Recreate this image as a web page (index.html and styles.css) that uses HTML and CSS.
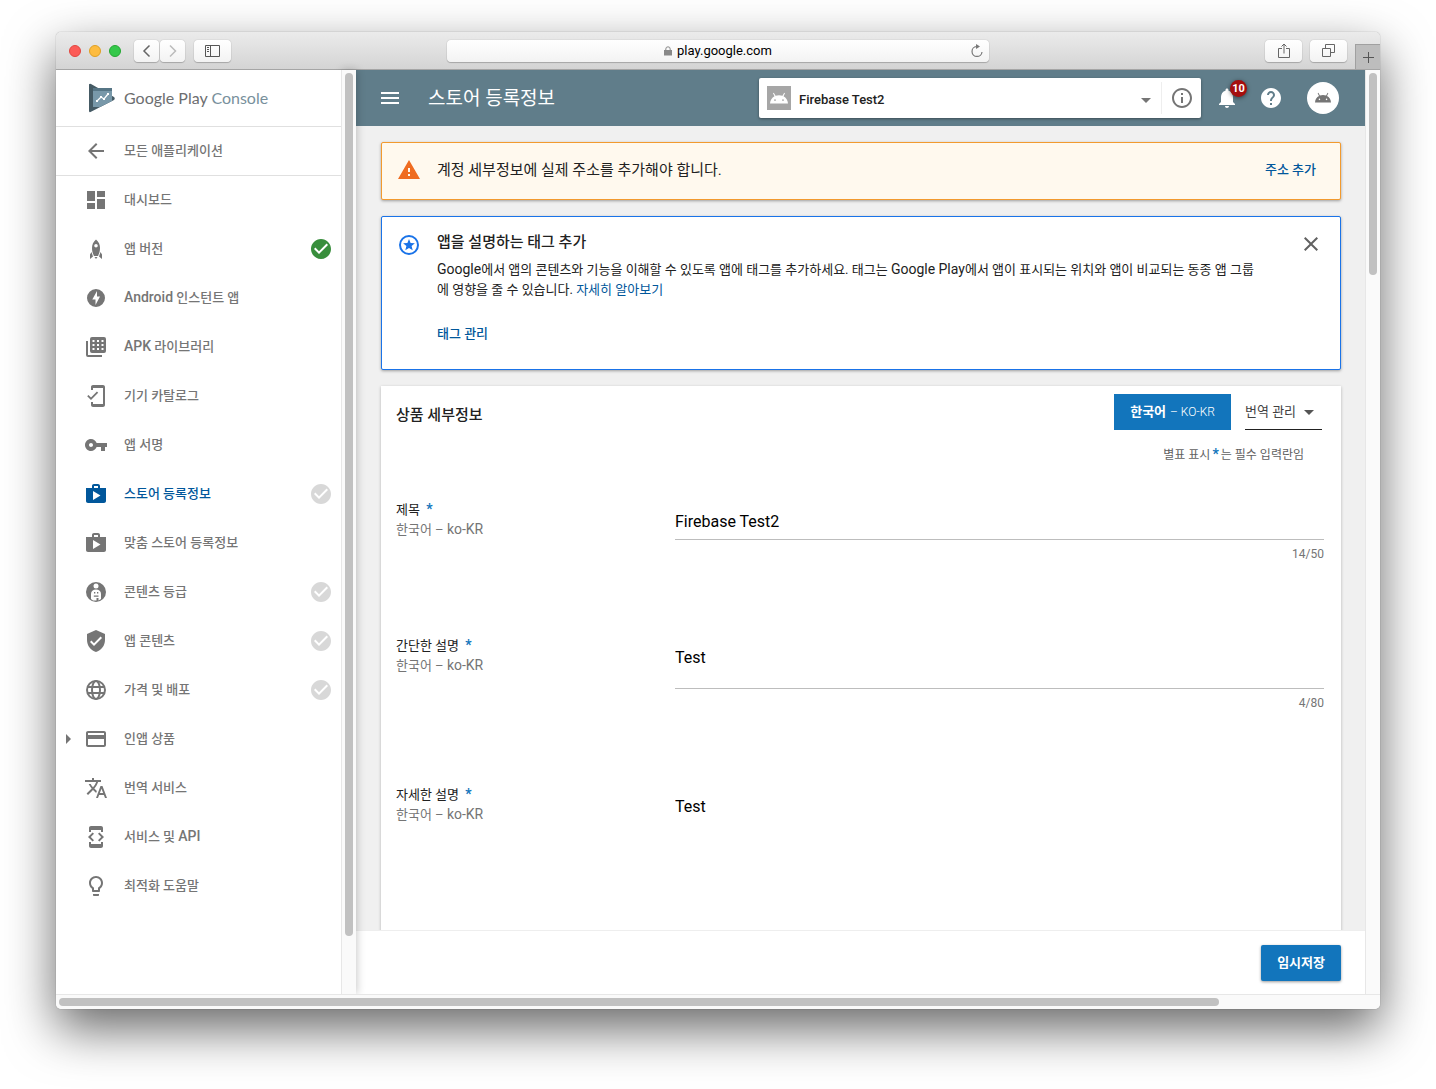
FILE: index.html
```
<!DOCTYPE html>
<html lang="ko">
<head>
  <meta charset="UTF-8">
  <meta name="viewport" content="width=device-width, initial-scale=1.0">
  <title>스토어 등록정보 - Google Play Console</title>
  <link rel="stylesheet" href="styles.css">
</head>
<body>
  <svg class="defs" width="0" height="0" aria-hidden="true">
    <symbol id="check" viewBox="0 0 24 24"><path d="M12 2C6.48 2 2 6.48 2 12s4.48 10 10 10 10-4.48 10-10S17.52 2 12 2zm-2 15l-5-5 1.41-1.41L10 14.17l7.59-7.59L19 8l-9 9z"/></symbol>
    <symbol id="shop" viewBox="0 0 24 24"><path d="M16 6V4c0-1.11-.89-2-2-2h-4c-1.11 0-2 .89-2 2v2H2v13c0 1.11.89 2 2 2h16c1.11 0 2-.89 2-2V6h-6zm-6-2h4v2h-4V4zM9 18V9l7.5 4.500L9 18z"/></symbol>
    <symbol id="android" viewBox="0 0 18 12"><path d="M0 11.500C.2 8.200 1.900 5.700 4.500 4.300L3 1.200l.8-.5 1.700 3.100c2.200-.9 4.800-.9 7 0L14.200.7l.8.5-1.500 3.100c2.600 1.400 4.300 3.900 4.500 7.200zM5 7.200a.9.900 0 1 0 0 1.800.9.900 0 0 0 0-1.800zm8 0a.9.900 0 1 0 0 1.800.9.900 0 0 0 0-1.800z"/></symbol>
  </svg>

  <div class="window">
    <div class="toolbar">
      <div class="tools">
        <span class="light red"></span>
        <span class="light yellow"></span>
        <span class="light green"></span>
        <div class="nav-buttons">
          <button class="tool" aria-label="Back"><svg width="25" height="22" viewBox="0 0 25 22"><path d="M15.500 5.500L10 11l5.500 5.500" stroke="#666" stroke-width="1.500"/></svg></button>
          <button class="tool" aria-label="Forward"><svg width="25" height="22" viewBox="0 0 25 22"><path d="M10 5.500l5.500 5.500-5.500 5.500" stroke="#bbb" stroke-width="1.500"/></svg></button>
        </div>
        <button class="tool wide" aria-label="Sidebar"><svg width="15" height="12" viewBox="0 0 15 12"><path d="M.5.500h14v11H.5zM5.500.500v11M2 2.500h2M2 4.500h2M2 6.500h2" stroke="#555"/></svg></button>
      </div>
      <div class="address">
        <svg width="8" height="10" viewBox="0 0 8 10"><path d="M0 4h8v5.500H0z" fill="#888"/><path d="M1.800 4.500V3a2.200 2.200 0 0 1 4.400 0v1.500" stroke="#888"/></svg>
        <span>play.google.com</span>
        <button class="reload" aria-label="Reload"><svg width="14" height="14" viewBox="0 0 14 14"><path d="M6.500 2.500A5 5 0 1 0 12 8" stroke="#777" stroke-width="1.200"/><path d="M6 0l4 2.500L6 5z" fill="#777"/></svg></button>
      </div>
      <div class="tools right">
        <button class="tool wide" aria-label="Share"><svg width="12" height="16" viewBox="0 0 12 16"><path d="M4 5.500H.5v9h11v-9H8M6 10.500V1M3.500 3.500L6 1l2.500 2.500" stroke="#666"/></svg></button>
        <button class="tool wide" aria-label="Tabs"><svg width="13" height="13" viewBox="0 0 13 13"><path d="M.5 4.500h8v8h-8zM3.500 4.500v-4h9v8h-4" stroke="#666"/></svg></button>
        <button class="new-tab" aria-label="New tab"><svg width="11" height="11" viewBox="0 0 11 11"><path d="M5.500 0v11M0 5.500h11" stroke="#555"/></svg></button>
      </div>
    </div>

    <div class="page">
      <aside class="sidebar">
        <a class="logo" href="#">
          <svg width="27" height="30" viewBox="0 0 27 30">
            <path d="M1.500 1Q1 .5 1 2v26q0 1.500 1.500 1L26 17q1.500-1.500 0-3L3 1Q2 .5 1.500 1z" fill="#455a64"/>
            <path d="M5 5h19v13L12 24H5z" fill="#7898a9"/>
            <path d="M5 5h19v3H5z" fill="#567585"/>
            <path d="M9 18l4-4 3 2 4-5" fill="none" stroke="#fff" stroke-width="1.300"/>
            <path d="M8 17h2v2H8zM12 13h2v2h-2zM15 15h2v2h-2zM19 10h2v2h-2z" fill="#fff"/>
          </svg>
          <span>Google Play <span class="console">Console</span></span>
        </a>
        <a class="item back" href="#">
          <svg class="icon" viewBox="0 0 24 24"><path d="M20 11H7.830l5.590-5.590L12 4l-8 8 8 8 1.410-1.410L7.830 13H20v-2z"/></svg>
          <span>모든 애플리케이션</span>
        </a>
        <nav>
          <a class="item" href="#">
            <svg class="icon" viewBox="0 0 24 24"><path d="M3 13h8V3H3v10zm0 8h8v-6H3v6zm10 0h8V11h-8v10zm0-18v6h8V3h-8z"/></svg>
            <span>대시보드</span>
          </a>
          <a class="item" href="#">
            <svg class="icon" viewBox="0 0 24 24"><path d="M12 2.500C9 5 8 8 8 11c0 3 .7 5.500 2 8h4c1.300-2.500 2-5 2-8 0-3-1-6-4-8.500zm0 4.500a1.800 1.800 0 1 1 0 3.600A1.800 1.800 0 0 1 12 7zM7.500 15L6 17.500V22l3-2.500zM16.500 15l1.500 2.500V22l-3-2.500zM10.500 20h3L12 22z"/></svg>
            <span>앱 버전</span>
            <svg class="status done"><use href="#check"/></svg>
          </a>
          <a class="item" href="#">
            <svg class="icon" viewBox="0 0 24 24"><path d="M12 3a9 9 0 1 0 0 18 9 9 0 0 0 0-18zm-.5 16v-5.500H8.300L13 5v5.500h3L11.500 19z"/></svg>
            <span><span class="latin">Android</span> 인스턴트 앱</span>
          </a>
          <a class="item" href="#">
            <svg class="icon" viewBox="0 0 24 24"><path fill-rule="evenodd" d="M8 2h12a2 2 0 0 1 2 2v12a2 2 0 0 1-2 2H8a2 2 0 0 1-2-2V4a2 2 0 0 1 2-2zm.500 3v2h2V5zm4.500 0v2h2V5zm4.500 0v2h2V5zm-9 4v2h2V9zm4.500 0v2h2V9zm4.500 0v2h2V9zm-9 4v2h2v-2zm4.500 0v2h2v-2zm4.500 0v2h2v-2zM2 6h2v14h14v2H4a2 2 0 0 1-2-2z"/></svg>
            <span><span class="latin">APK</span> 라이브러리</span>
          </a>
          <a class="item" href="#">
            <svg class="icon" viewBox="0 0 24 24"><path d="M19 1H9c-1.100 0-2 .9-2 2v3h2V4h10v16H9v-2H7v3c0 1.100.9 2 2 2h10c1.100 0 2-.9 2-2V3c0-1.100-.9-2-2-2zM7.010 13.470l-2.550-2.550-1.270 1.270L7 16l7.190-7.190-1.270-1.270z"/></svg>
            <span>기기 카탈로그</span>
          </a>
          <a class="item" href="#">
            <svg class="icon" viewBox="0 0 24 24"><path d="M12.650 10C11.830 7.670 9.610 6 7 6c-3.310 0-6 2.690-6 6s2.690 6 6 6c2.610 0 4.830-1.670 5.650-4H17v4h4v-4h2v-4H12.650zM7 14c-1.100 0-2-.9-2-2s.9-2 2-2 2 .9 2 2-.9 2-2 2z"/></svg>
            <span>앱 서명</span>
          </a>
          <a class="item active" href="#">
            <svg class="icon"><use href="#shop"/></svg>
            <span>스토어 등록정보</span>
            <svg class="status"><use href="#check"/></svg>
          </a>
          <a class="item" href="#">
            <svg class="icon"><use href="#shop"/></svg>
            <span>맞춤 스토어 등록정보</span>
          </a>
          <a class="item" href="#">
            <svg class="icon" viewBox="0 0 24 24"><circle cx="12" cy="12" r="10"/><circle cx="12" cy="6" r="2.500" fill="#fff"/><path d="M7 19v-5c0-3 2-4.500 5-4.500s5 1.500 5 4.500v5l-2.500 1.500V18h-2v2.500H9z" fill="#fff"/><path d="M10 12h1.300v1.500H10zM13 12h1.300v1.500H13zM9.800 15.500h4.700v1.300H9.800z"/></svg>
            <span>콘텐츠 등급</span>
            <svg class="status"><use href="#check"/></svg>
          </a>
          <a class="item" href="#">
            <svg class="icon" viewBox="0 0 24 24"><path d="M12 1L3 5v6c0 5.550 3.840 10.740 9 12 5.160-1.260 9-6.450 9-12V5l-9-4zm-2 16l-4-4 1.410-1.410L10 14.170l6.590-6.590L18 9l-8 8z"/></svg>
            <span>앱 콘텐츠</span>
            <svg class="status"><use href="#check"/></svg>
          </a>
          <a class="item" href="#">
            <svg class="icon line" viewBox="0 0 24 24"><circle cx="12" cy="12" r="9"/><ellipse cx="12" cy="12" rx="4" ry="9"/><path d="M3.500 9h17M3.500 15h17"/></svg>
            <span>가격 및 배포</span>
            <svg class="status"><use href="#check"/></svg>
          </a>
          <a class="item expandable" href="#">
            <svg class="icon" viewBox="0 0 24 24"><path d="M20 4H4c-1.110 0-2 .89-2 2v12c0 1.110.89 2 2 2h16c1.110 0 2-.89 2-2V6c0-1.110-.89-2-2-2zm0 14H4v-6h16v6zm0-10H4V6h16v2z"/></svg>
            <span>인앱 상품</span>
          </a>
          <a class="item" href="#">
            <svg class="icon" viewBox="0 0 24 24"><path d="M12.870 15.070l-2.540-2.510.03-.03c1.740-1.940 2.980-4.170 3.710-6.530H17V4h-7V2H8v2H1v1.990h11.170C11.500 7.920 10.440 9.750 9 11.350 8.070 10.320 7.300 9.190 6.690 8h-2c.73 1.630 1.730 3.170 2.980 4.560l-5.090 5.020L4 19l5-5 3.110 3.110.76-2.040zM18.500 10h-2L12 22h2l1.120-3h4.750L21 22h2l-4.500-12zm-2.620 7l1.620-4.330L19.120 17h-3.240z"/></svg>
            <span>번역 서비스</span>
          </a>
          <a class="item" href="#">
            <svg class="icon" viewBox="0 0 24 24"><path d="M7 5h10v2h2V3c0-1.100-.9-2-2-2H7c-1.100 0-2 .9-2 2v4h2V5zm8.410 11.590L20 12l-4.590-4.590L14 8.830 17.170 12 14 15.170l1.410 1.420zM10 15.170L6.830 12 10 8.830 8.590 7.410 4 12l4.590 4.590L10 15.170zM17 19H7v-2H5v4c0 1.100.9 2 2 2h10c1.100 0 2-.9 2-2v-4h-2v2z"/></svg>
            <span>서비스 및 <span class="latin">API</span></span>
          </a>
          <a class="item" href="#">
            <svg class="icon" viewBox="0 0 24 24"><path d="M9 21c0 .55.45 1 1 1h4c.55 0 1-.45 1-1v-1H9v1zm3-19C8.140 2 5 5.140 5 9c0 2.380 1.190 4.470 3 5.740V17c0 .55.45 1 1 1h6c.55 0 1-.45 1-1v-2.260c1.810-1.270 3-3.360 3-5.740 0-3.860-3.140-7-7-7zm2.850 11.100l-.85.6V16h-4v-2.300l-.85-.6C7.800 12.160 7 10.630 7 9c0-2.760 2.240-5 5-5s5 2.240 5 5c0 1.630-.8 3.160-2.150 4.100z"/></svg>
            <span>최적화 도움말</span>
          </a>
        </nav>
      </aside>
      <div class="track side-track"><div class="thumb"></div></div>

      <main class="main">
        <header class="header">
          <button class="menu" aria-label="메뉴"><svg width="18" height="12" viewBox="0 0 18 12"><path d="M0 0h18v2H0zM0 5h18v2H0zM0 10h18v2H0z" fill="#fff"/></svg></button>
          <h1>스토어 등록정보</h1>
          <div class="app-picker">
            <span class="app-icon"><svg width="18" height="12"><use href="#android"/></svg></span>
            <select class="app-select" aria-label="앱"><option>Firebase Test2</option></select>
            <button class="info" aria-label="정보"><svg class="icon" viewBox="0 0 24 24"><path d="M11 17h2v-6h-2v6zm1-15C6.480 2 2 6.480 2 12s4.480 10 10 10 10-4.480 10-10S17.520 2 12 2zm0 18c-4.410 0-8-3.590-8-8s3.590-8 8-8 8 3.590 8 8-3.590 8-8 8zM11 9h2V7h-2v2z"/></svg></button>
          </div>
          <button class="bell" aria-label="알림">
            <svg class="icon" viewBox="0 0 24 24"><path d="M12 22c1.100 0 2-.9 2-2h-4c0 1.100.89 2 2 2zm6-6v-5c0-3.070-1.640-5.640-4.500-6.320V4c0-.83-.67-1.500-1.500-1.500s-1.500.67-1.500 1.500v.68C7.630 5.360 6 7.920 6 11v5l-2 2v1h16v-1l-2-2z"/></svg>
            <span class="badge">10</span>
          </button>
          <button class="help" aria-label="도움말"><svg class="icon" viewBox="0 0 24 24"><path d="M12 2C6.480 2 2 6.480 2 12s4.480 10 10 10 10-4.480 10-10S17.520 2 12 2zm1 17h-2v-2h2v2zm2.070-7.750l-.9.920C13.450 12.900 13 13.500 13 15h-2v-.5c0-1.100.45-2.100 1.170-2.830l1.240-1.260c.37-.36.59-.86.59-1.410 0-1.100-.9-2-2-2s-2 .9-2 2H8c0-2.210 1.790-4 4-4s4 1.790 4 4c0 .88-.36 1.680-.93 2.250z"/></svg></button>
          <button class="avatar" aria-label="계정"><svg width="16" height="11"><use href="#android"/></svg></button>
        </header>

        <div class="content">
          <section class="notice warning">
            <svg class="icon" viewBox="0 0 24 24"><path d="M1 21h22L12 2 1 21zm12-3h-2v-2h2v2zm0-4h-2v-4h2v4z"/></svg>
            <p class="notice-title">계정 세부정보에 실제 주소를 추가해야 합니다.</p>
            <a class="action" href="#">주소 추가</a>
          </section>

          <section class="notice tip">
            <svg class="icon" viewBox="0 0 24 24"><circle cx="12" cy="12" r="9" fill="none" stroke="#1a73e8" stroke-width="2"/><path d="M12 6l1.600 4 4.300.3-3.300 2.700 1.100 4.200L12 14.900l-3.700 2.300 1.100-4.200-3.300-2.700 4.300-.3z"/></svg>
            <div class="tip-body">
              <h2 class="notice-title strong">앱을 설명하는 태그 추가</h2>
              <p><span class="latin">Google</span>에서 앱의 콘텐츠와 기능을 이해할 수 있도록 앱에 태그를 추가하세요. 태그는 <span class="latin">Google Play</span>에서 앱이 표시되는 위치와 앱이 비교되는 동종 앱 그룹에 영향을 줄 수 있습니다. <a href="#">자세히 알아보기</a></p>
              <a class="action" href="#">태그 관리</a>
            </div>
            <button class="close" aria-label="닫기"><svg class="icon" viewBox="0 0 24 24"><path d="M19 6.410L17.590 5 12 10.590 6.410 5 5 6.410 10.590 12 5 17.590 6.410 19 12 13.410 17.590 19 19 17.590 13.410 12z"/></svg></button>
          </section>

          <form class="card">
            <div class="card-head">
              <h2>상품 세부정보</h2>
              <button class="lang" type="button">한국어 <span>– KO-KR</span></button>
              <select class="translate" aria-label="번역 관리"><option>번역 관리</option></select>
            </div>
            <p class="required">별표 표시<b>*</b>는 필수 입력란임</p>

            <div class="field">
              <label for="title">제목 <b>*</b><span>한국어 – <span class="latin">ko-KR</span></span></label>
              <div>
                <input id="title" type="text" value="Firebase Test2">
                <p class="count">14/50</p>
              </div>
            </div>
            <div class="field">
              <label for="short">간단한 설명 <b>*</b><span>한국어 – <span class="latin">ko-KR</span></span></label>
              <div>
                <textarea id="short">Test</textarea>
                <p class="count">4/80</p>
              </div>
            </div>
            <div class="field">
              <label for="full">자세한 설명 <b>*</b><span>한국어 – <span class="latin">ko-KR</span></span></label>
              <div>
                <textarea id="full" class="tall">Test</textarea>
              </div>
            </div>
          </form>
        </div>

        <footer class="footer">
          <button class="save">임시저장</button>
        </footer>
      </main>
      <div class="track main-track"><div class="thumb"></div></div>
    </div>
    <div class="bottom-track"><div class="thumb"></div></div>
  </div>
</body>
</html>
```
FILE: styles.css
```
* {box-sizing: border-box;}
body {margin: 0; height: 100vh; padding: 32px 56px 80px; display: flex; background: #fff; color: #212121; font: 13px/20px Roboto, "Noto Sans CJK KR", sans-serif; overflow: hidden;}
h1, h2, p {margin: 0; font-weight: 400;}
a {color: #01579b; text-decoration: none;}
button, input, select, textarea {font: inherit; color: inherit; margin: 0; padding: 0; border: 0; background: none; border-radius: 0; outline: 0;}
button {display: flex; align-items: center; justify-content: center;}
select {appearance: none;}
svg {display: block; flex: none;}
.defs {position: absolute;}
.icon {width: 24px; height: 24px; fill: currentColor;}
.icon.line {fill: none; stroke: currentColor; stroke-width: 2;}
.latin {font-size: 14px; line-height: 14px;}

/* browser window */
.window {flex: 1; min-width: 0; display: flex; flex-direction: column; border-radius: 5px; overflow: hidden; background: #fafafa; box-shadow: 0 0 1px rgba(0, 0, 0, .5), 0 20px 50px rgba(0, 0, 0, .6);}
.toolbar {flex: none; height: 38px; display: grid; grid-template-columns: 1fr 41% 1fr; align-items: center; background: linear-gradient(#ebebeb, #d4d4d4); border-bottom: 1px solid #a5a5a5;}
.tools {display: flex; align-items: center; height: 100%; padding-left: 13px;}
.light {width: 12px; height: 12px; margin-right: 8px; border-radius: 50%;}
.red {background: #fc5b57; border: 1px solid #e2463f;}
.yellow {background: #fdbc40; border: 1px solid #dfa023;}
.green {background: #34c84a; border: 1px solid #24a732;}
.nav-buttons {display: flex; gap: 1px; margin: 0 9px 0 5px;}
.tool {height: 22px; border-radius: 4px; background: linear-gradient(#fff, #f3f3f3); box-shadow: 0 0 1px rgba(0, 0, 0, .35), 0 1px 1px rgba(0, 0, 0, .2);}
.tool svg, .address svg, .new-tab svg {fill: none;}
.wide {width: 37px;}
.address {display: flex; align-items: center; justify-content: center; gap: 5px; height: 22px; padding-top: 1px; color: #000; border-radius: 4px; background: linear-gradient(#fff, #f3f3f3); box-shadow: 0 0 1px rgba(0, 0, 0, .35), 0 1px 1px rgba(0, 0, 0, .2); position: relative;}
.reload {position: absolute; right: 5px;}
.right {justify-content: flex-end; gap: 8px;}
.new-tab {align-self: flex-end; width: 25px; height: 25px; background: #bdbdbd; border: 1px solid #a0a0a0; border-width: 1px 0 0 1px;}
.page {flex: 1; min-height: 0; display: flex;}
.track {flex: none; width: 15px; padding: 3px 2px; background: #fafafa; border-left: 1px solid #e7e7e7;}
.thumb {width: 8px; border-radius: 4px; background: #c1c1c1;}
.side-track {position: relative; box-shadow: 1px 0 8px rgba(0, 0, 0, .22);}
.side-track .thumb {height: 94%; margin-left: 1px;}
.main-track .thumb {height: 22%; margin-left: 1px;}
.bottom-track {position: relative; z-index: 1; flex: none; height: 15px; padding: 3px; background: #fafafa; border-top: 1px solid #e7e7e7;}
.bottom-track .thumb {width: 88%; height: 8px;}

/* sidebar */
.sidebar {position: relative; z-index: 1; flex: none; width: 285px; background: #fff; overflow: hidden;}
.logo {display: flex; align-items: center; gap: 9px; height: 57px; padding: 0 0 1px 32px; border-bottom: 1px solid #e0e0e0; color: #6d6e70; font: 16px/24px Lato, sans-serif;}
.console {color: #78909c;}
.item {display: flex; align-items: center; height: 49px; padding: 0 8px 1px 28px; color: #757575; font-weight: 500;}
.item .icon {margin-right: 16px;}
.back {padding-bottom: 0; border-bottom: 1px solid #e0e0e0;}
.active {color: #01579b;}
.status {width: 24px; height: 24px; margin-left: auto; fill: #d8d8d8;}
.done {fill: #388e3c;}
.expandable {padding-left: 10px;}
.expandable::before {content: ""; border: 5px solid transparent; border-left-color: #757575; border-right: 0; margin-right: 13px;}

/* header */
.main {flex: 1; min-width: 0; display: flex; flex-direction: column; background: #f0f0f0;}
.header {flex: none; display: flex; align-items: center; height: 56px; padding: 0 26px 0 25px; background: #607d8a; color: #fff;}
.header h1 {margin-left: 29px; padding-top: 2px; font-size: 19px; line-height: 28px;}
.app-picker {display: flex; align-items: center; width: 442px; height: 40px; margin-left: auto; padding-left: 8px; border-radius: 2px; background: #fff; color: #212121; box-shadow: 0 1px 3px rgba(0, 0, 0, .4);}
.app-icon {display: flex; align-items: center; justify-content: center; width: 24px; height: 24px; background: #a6a6a6; fill: #fff;}
.app-select {flex: 1; height: 32px; padding: 3px 8px 0; font-weight: 500; background: url("data:image/svg+xml,%3Csvg xmlns='http://www.w3.org/2000/svg' width='10' height='5'%3E%3Cpath d='M0 0h10L5 5z' fill='%23757575'/%3E%3C/svg%3E") no-repeat right 10px top 16px;}
.info {width: 40px; height: 32px; color: #757575; border-left: 1px solid #eee;}
.bell {position: relative; margin-left: 14px;}
.badge {position: absolute; top: -6px; left: 15px; width: 17px; height: 17px; border-radius: 50%; background: #a50e0e; box-shadow: 0 1px 4px rgba(0, 0, 0, .5); font-size: 11px; line-height: 17px; font-weight: 700;}
.help {margin-left: 20px;}
.avatar {width: 32px; height: 32px; margin-left: 24px; padding-bottom: 2px; border-radius: 50%; background: #fff; fill: #757575;}

/* notices */
.content {flex: 1; min-height: 0; overflow: hidden; padding: 16px 24px 0 25px; display: flex; flex-direction: column; gap: 16px;}
.notice {flex: none; display: flex; border: 1px solid; border-radius: 2px; box-shadow: 0 1px 3px rgba(0, 0, 0, .35);}
.notice > .icon {margin: 0 16px 0 15px;}
.notice-title {font-size: 15px; line-height: 24px;}
.strong {font-weight: 500;}
.action {font-weight: 500;}
.warning {align-items: center; height: 58px; padding: 0 24px 2px 0; background: #fff9ee; border-color: #f29a2e;}
.warning .icon {color: #ef6c20;}
.warning .action {margin-left: auto;}
.tip {height: 154px; padding: 13px 17px 0 0; background: #fff; border-color: #1a73e8;}
.tip > .icon {margin-top: 3px; color: #1a73e8;}
.tip-body {flex: 1; padding-right: 40px;}
.tip-body p {margin: 6px 0 24px;}
.close {align-self: flex-start; margin-top: 2px; color: #616161;}

/* product details */
.card {flex: none; padding: 8px 17px 0 15px; background: #fff; box-shadow: 0 1px 3px rgba(0, 0, 0, .25);}
.card-head {display: flex; align-items: center; padding-right: 2px;}
.card-head h2 {margin: 5px auto 0 0; font-size: 15px; line-height: 24px; font-weight: 500;}
.lang {height: 36px; margin-right: 14px; padding: 0 16px; gap: 4px; background: #1275bc; color: #fff; font-weight: 700;}
.lang span {font-size: 12px; font-weight: 300;}
.translate {width: 77px; height: 36px; color: #424242; border-bottom: 1px solid #212121; background: url("data:image/svg+xml,%3Csvg xmlns='http://www.w3.org/2000/svg' width='10' height='5'%3E%3Cpath d='M0 0h10L5 5z' fill='%23555'/%3E%3C/svg%3E") no-repeat right 8px top 16px;}
.required {margin: 15px 0 35px; padding-right: 20px; color: #616161; font-size: 12px; text-align: right;}
.required b {margin: 0 2px; color: #1275bc; font-size: 14px; line-height: 14px;}
.field {display: grid; grid-template-columns: 279px 1fr; padding-bottom: 72px;}
.field b {margin-left: 3px; color: #1275bc; font-size: 14px; line-height: 14px;}
.field label > span {display: block; color: #757575;}
.field input, .field textarea {display: block; width: 100%; height: 40px; padding: 11px 0 8px; border-bottom: 1px solid #bdbdbd; color: #000; font-size: 16px; line-height: 20px; resize: none;}
.field textarea {height: 53px; padding-top: 12px;}
.field .tall {height: 240px;}
.count {margin-top: 4px; color: #757575; font-size: 12px; text-align: right;}

.footer {flex: none; display: flex; align-items: center; justify-content: flex-end; height: 64px; padding-right: 24px; background: #fff; border-top: 1px solid #eee;}
.save {height: 36px; padding: 0 16px; border-radius: 2px; background: #1275bc; color: #fff; font-weight: 700; box-shadow: 0 1px 3px rgba(0, 0, 0, .4);}
```
